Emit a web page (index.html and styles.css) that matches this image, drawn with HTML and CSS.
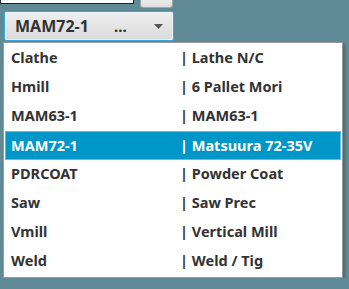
FILE: index.html
```html
<!DOCTYPE html>
<html>
<head>
<meta name="viewport" content="width=device-width, initial-scale=1">
<link rel="stylesheet" href="styles.css">
</head>
<body>

<div class="topbar">
    <div class="field"></div>
    <div class="smallbtn"></div>
</div>

<div class="combo">
    <span class="combo-text">MAM72-1</span>
    <span class="combo-dots">...</span>
    <svg class="combo-arrow" width="9" height="5" viewBox="0 0 9 5"><path d="M0 0 H9 L4.5 5 Z" fill="#555"/></svg>
</div>

<div class="list">
    <div class="row"><span class="code">Clathe</span><span class="desc">| Lathe N/C</span></div>
    <div class="row"><span class="code">Hmill</span><span class="desc">| 6 Pallet Mori</span></div>
    <div class="row"><span class="code">MAM63-1</span><span class="desc">| MAM63-1</span></div>
    <div class="row selected"><span class="code">MAM72-1</span><span class="desc">| Matsuura 72-35V</span></div>
    <div class="row"><span class="code">PDRCOAT</span><span class="desc">| Powder Coat</span></div>
    <div class="row"><span class="code">Saw</span><span class="desc">| Saw Prec</span></div>
    <div class="row"><span class="code">Vmill</span><span class="desc">| Vertical Mill</span></div>
    <div class="row"><span class="code">Weld</span><span class="desc">| Weld / Tig</span></div>
</div>

</body>
</html>
```

FILE: styles.css
```css
body {
  margin: 0;
  background-color: #5f8a96;
  font-family: "Noto Sans", "Open Sans", sans-serif;
  font-weight: 700;
  color: #333;
}

/* Top strip that is cut by the window edge */
.topbar {
  display: flex;
  gap: 6px;
  height: 8px;
}

.field {
  width: 132px;
  height: 3px;
  background: #fff;
  border: 1px solid #222;
  border-top: none;
}

.smallbtn {
  width: 31px;
  height: 7px;
  background: linear-gradient(#ececec, #dddddd);
  border: 1px solid #9aa;
  border-top: none;
  border-radius: 0 0 3px 3px;
}

/* Combo box */
.combo {
  display: flex;
  align-items: center;
  box-sizing: border-box;
  width: 170px;
  height: 30px;
  margin: 3px 0 0 4px;
  padding: 0 10px 1px 10px;
  background: linear-gradient(#efefef, #dadada);
  border: 1px solid #3aa8dd;
  border-radius: 2px;
  box-shadow: inset 0 0 0 1px #e8f4fb;
}

.combo-text {
  font-size: 16px;
  width: 99px;
}

.combo-dots {
  font-size: 15px;
  flex: 1;
}

.combo-arrow {
  margin-top: 2px;
}

/* Drop down list */
.list {
  box-sizing: border-box;
  width: 340px;
  margin: 1px 0 0 3px;
  padding: 1px;
  background: #fff;
  border: 1px solid #9a9a9a;
  box-shadow: 2px 2px 3px rgba(0, 0, 0, 0.25);
}

.row {
  display: flex;
  align-items: center;
  height: 29px;
  box-sizing: border-box;
  padding: 0 0 3px 6px;
  font-size: 14.5px;
}

.code {
  width: 169px;
}

.selected {
  background: #0096c8;
  color: #fff;
  border: 1px solid #5cc0e6;
  padding: 0 0 2px 5px;
}
```
